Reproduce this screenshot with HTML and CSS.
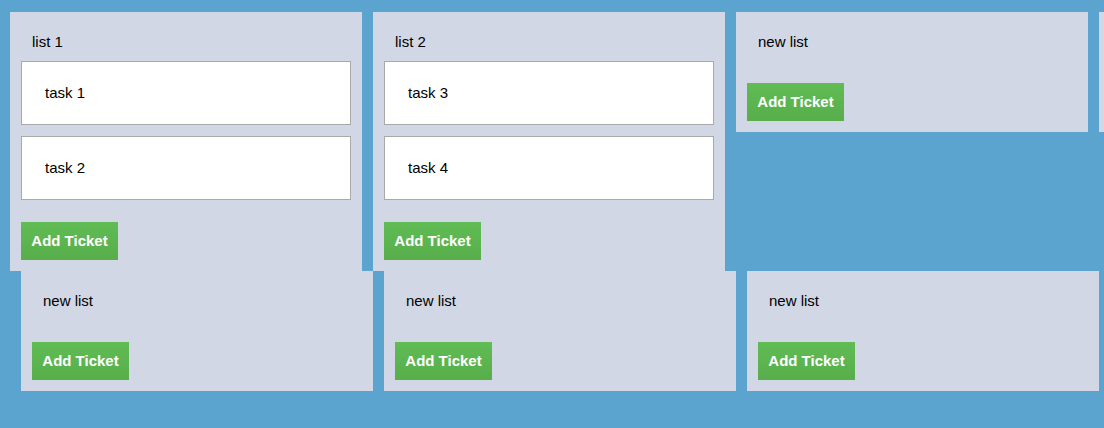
FILE: index.html
```html
<!DOCTYPE html>
<html>
<head>
<meta charset="utf-8">
<link rel="stylesheet" href="styles.css">
</head>
<body>
<div class="board">
  <div class="row row-top">
    <div class="list">
      <div class="list-title">list 1</div>
      <div class="tasks">
        <div class="task">task 1</div>
        <div class="task">task 2</div>
      </div>
      <button class="add-btn">Add Ticket</button>
    </div>
    <div class="list">
      <div class="list-title">list 2</div>
      <div class="tasks">
        <div class="task">task 3</div>
        <div class="task">task 4</div>
      </div>
      <button class="add-btn">Add Ticket</button>
    </div>
    <div class="list">
      <div class="list-title">new list</div>
      <div class="tasks"></div>
      <button class="add-btn">Add Ticket</button>
    </div>
    <div class="list">
      <div class="list-title">new list</div>
      <div class="tasks"></div>
      <button class="add-btn">Add Ticket</button>
    </div>
  </div>
  <div class="row row-bottom">
    <div class="list">
      <div class="list-title">new list</div>
      <div class="tasks"></div>
      <button class="add-btn">Add Ticket</button>
    </div>
    <div class="list">
      <div class="list-title">new list</div>
      <div class="tasks"></div>
      <button class="add-btn">Add Ticket</button>
    </div>
    <div class="list">
      <div class="list-title">new list</div>
      <div class="tasks"></div>
      <button class="add-btn">Add Ticket</button>
    </div>
  </div>
</div>
</body>
</html>
```
FILE: styles.css
```css
html, body {
  margin: 0;
  padding: 0;
  background: #5ba4cf;
  overflow: hidden;
  font-family: "Liberation Sans", Arial, sans-serif;
  font-size: 15px;
  color: #000;
}

.board {
  height: 428px;
}

.row {
  display: flex;
  align-items: flex-start;
  gap: 11px;
  overflow: hidden;
}

.row-top {
  padding: 12px 0 0 10px;
}

.row-bottom {
  padding-left: 21px;
}

.list {
  flex: 0 0 352px;
  width: 352px;
  box-sizing: border-box;
  padding: 11px;
  background: #d1d7e4;
}

.list-title {
  height: 38px;
  line-height: 38px;
  padding-left: 11px;
}

.tasks {
  display: flex;
  flex-direction: column;
  gap: 11px;
}

.task {
  height: 64px;
  box-sizing: border-box;
  background: #fff;
  border: 1px solid #a9a9a9;
  padding: 0 0 2px 23px;
  display: flex;
  align-items: center;
}

.add-btn {
  display: block;
  margin-top: 22px;
  height: 38px;
  width: 97px;
  padding: 0 0 2px;
  border: 0;
  background: linear-gradient(#61bc54, #57ae4b);
  color: #fff;
  font-family: "Liberation Sans", Arial, sans-serif;
  font-weight: bold;
  font-size: 15px;
  cursor: pointer;
}
```
